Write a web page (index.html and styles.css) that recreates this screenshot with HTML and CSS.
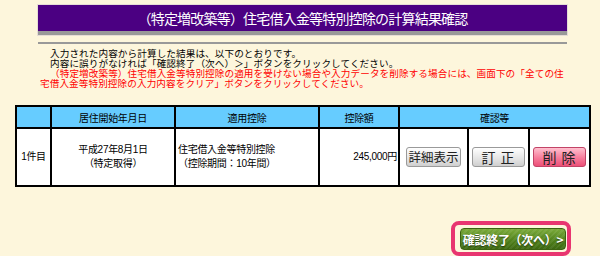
FILE: index.html
```html
<!DOCTYPE html>
<html lang="ja">
<head>
<meta charset="utf-8">
<title>計算結果確認</title>
<link rel="stylesheet" href="styles.css">
</head>
<body>
<div class="page">
  <div class="titlebar"><h1 class="title">（特定増改築等）住宅借入金等特別控除の計算結果確認</h1></div>
  <div class="rule"></div>
  <div class="intro">
    <p class="para">入力された内容から計算した結果は、以下のとおりです。</p>
    <p class="para">内容に誤りがなければ「確認終了（次へ）＞」ボタンをクリックしてください。</p>
    <p class="para warn">（特定増改築等）住宅借入金等特別控除の適用を受けない場合や入力データを削除する場合には、画面下の「全ての住宅借入金等特別控除の入力内容をクリア」ボタンをクリックしてください。</p>
  </div>
  <table class="result">
    <colgroup>
      <col class="c-no"><col class="c-date"><col class="c-kind"><col class="c-amt"><col class="c-b1"><col class="c-b2"><col class="c-b3">
    </colgroup>
    <thead>
      <tr>
        <th></th>
        <th>居住開始年月日</th>
        <th>適用控除</th>
        <th>控除額</th>
        <th colspan="3">確認等</th>
      </tr>
    </thead>
    <tbody>
      <tr>
        <td class="center">1件目</td>
        <td class="center">平成27年8月1日<br>（特定取得）</td>
        <td class="left">住宅借入金等特別控除<br>（控除期間：10年間）</td>
        <td class="right">245,000円</td>
        <td class="center"><button class="btn gray">詳細表示</button></td>
        <td class="center"><button class="btn gray wide">訂 正</button></td>
        <td class="center"><button class="btn pink wide">削 除</button></td>
      </tr>
    </tbody>
  </table>
  <div class="footer">
    <div class="frame"><button class="next">確認終了（次へ）&gt;</button></div>
  </div>
</div>
</body>
</html>
```
FILE: styles.css
```css
html, body {
  margin: 0;
  padding: 0;
  background: #fdf6dc;
}
body {
  font-family: "Liberation Sans", "Noto Sans CJK JP", sans-serif;
  color: #000;
}
.page {
  width: 600px;
  height: 256px;
  overflow: hidden;
  padding-top: 5px;
  box-sizing: border-box;
}
.titlebar {
  margin-left: 38px;
  width: 529px;
  height: 26px;
  background: #4b0082;
  border-bottom: 4px solid #999;
  box-shadow: 0 0 0 1px #e6ddd6;
  display: flex;
  align-items: center;
  justify-content: center;
}
.title {
  margin: 0;
  color: #fff;
  font-size: 14px;
  font-weight: normal;
  letter-spacing: -0.8px;
  line-height: 1;
  padding-top: 1px;
}
.rule {
  margin: 7px 0 0 38px;
  width: 529px;
  height: 2px;
  background: #999;
}
.intro {
  margin: 5px 0 0 40px;
  width: 528px;
  font-size: 9.6px;
  line-height: 10px;
  letter-spacing: 0.1px;
}
.para {
  margin: 0;
  text-indent: 10px;
}
.warn {
  color: #f00;
}
.result {
  margin: 16px 0 0 15px;
  width: 574px;
  border-collapse: collapse;
  table-layout: fixed;
  font-size: 10px;
  letter-spacing: -0.3px;
}
.c-no { width: 35px; }
.c-date { width: 124px; }
.c-kind { width: 144px; }
.c-amt { width: 80px; }
.c-b1 { width: 69px; }
.c-b2 { width: 61px; }
.c-b3 { width: 61px; }
.result th, .result td {
  border: 2px solid #000;
  padding: 0;
}
.result th {
  background: #66ccff;
  height: 20px;
  font-weight: normal;
  text-align: center;
}
.result td {
  background: #fff;
  height: 56px;
  line-height: 14px;
  vertical-align: middle;
}
.center { text-align: center; }
.left { text-align: left; padding-left: 2px !important; }
.right { text-align: right; padding-right: 1px !important; }
.btn {
  font-family: "Noto Sans CJK JP", sans-serif;
  font-size: 12.5px;
  line-height: 1;
  height: 20px;
  width: 55px;
  padding: 0;
  border-radius: 3px;
  color: #222;
  letter-spacing: 0;
  cursor: pointer;
}
.btn.wide {
  width: 53px;
  font-size: 14px;
  letter-spacing: 1px;
}
.gray {
  background: linear-gradient(#ffffff, #e4e4e4 60%, #cfcfcf);
  border: 1px solid #9a9a9a;
}
.pink {
  background: linear-gradient(#ffc0cf, #f77c9b 55%, #ec5078);
  border: 1px solid #c24467;
}
.footer {
  display: flex;
  justify-content: flex-end;
  margin-top: 34px;
  padding-right: 29px;
}
.frame {
  border: 4px solid #e83570;
  border-radius: 8px;
  padding: 3px 1px 2px 5px;
  display: flex;
}
.next {
  font-family: "Noto Sans CJK JP", sans-serif;
  font-size: 12px;
  font-weight: bold;
  color: #fff;
  width: 106px;
  height: 22px;
  padding: 0;
  border: 1px solid #3c6210;
  border-radius: 4px;
  background:
    repeating-linear-gradient(135deg, rgba(255,255,255,0.07) 0 2px, transparent 2px 4px),
    linear-gradient(#7aaa3a, #4e7f1a 60%, #3d6811);
  text-shadow: 0 1px 1px rgba(0,0,0,0.5);
  letter-spacing: -0.3px;
  cursor: pointer;
}
```
